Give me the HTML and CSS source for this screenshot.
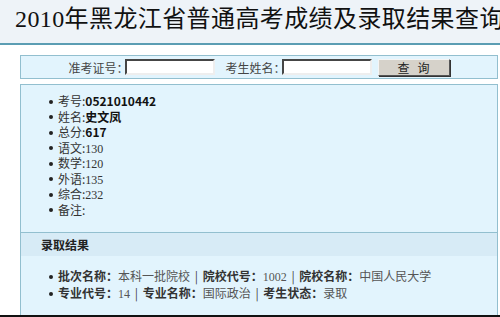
FILE: index.html
```html
<!DOCTYPE html>
<html lang="zh-CN">
<head>
    <meta charset="UTF-8">
    <title>2010年黑龙江省普通高考成绩及录取结果查询</title>
    <link rel="stylesheet" href="styles.css">
</head>
<body>
    <div class="page">
        <div class="header">
            <h1>2010年黑龙江省普通高考成绩及录取结果查询</h1>
        </div>
        <div class="main">
            <form class="search">
                <label for="zkzh">准考证号：</label>
                <input type="text" id="zkzh" name="zkzh">
                <label for="xm" class="second">考生姓名：</label>
                <input type="text" id="xm" name="xm">
                <button type="button">查&nbsp;&nbsp;&nbsp;询</button>
            </form>
            <div class="result">
                <ul class="score">
                    <li>考号:<b>0521010442</b></li>
                    <li>姓名:<b>史文凤</b></li>
                    <li>总分:<b>617</b></li>
                    <li>语文:<span class="num">130</span></li>
                    <li>数学:<span class="num">120</span></li>
                    <li>外语:<span class="num">135</span></li>
                    <li>综合:<span class="num">232</span></li>
                    <li>备注:</li>
                </ul>
                <div class="admit-title">录取结果</div>
                <ul class="admit">
                    <li><b>批次名称：</b>本科一批院校 <span class="sep">|</span> <b>院校代号：</b><span class="num">1002</span> <span class="sep">|</span> <b>院校名称：</b>中国人民大学</li>
                    <li><b>专业代号：</b><span class="num">14</span> <span class="sep">|</span> <b>专业名称：</b>国际政治 <span class="sep">|</span> <b>考生状态：</b>录取</li>
                </ul>
            </div>
        </div>
    </div>
</body>
</html>
```

FILE: styles.css
```css
body {
    margin: 0;
    padding: 0;
    background-color: white;
    font-family: "Noto Sans CJK SC", sans-serif;
    font-size: 12px;
    color: #333;
}

.page {
    height: 315px;
    overflow: hidden;
    border-bottom: 2px solid #111;
}

.header {
    height: 43px;
    background-color: #eef3f8;
    border-bottom: 2px solid #5b9db3;
    white-space: nowrap;
    overflow: hidden;
}

.header h1 {
    margin: 0;
    padding-left: 15px;
    font-family: "Liberation Serif", "Noto Sans CJK SC", serif;
    font-size: 24px;
    font-weight: normal;
    letter-spacing: 0.4px;
    line-height: 38px;
    color: #111;
}

.main {
    padding: 10px 2px 0 20px;
}

.search {
    display: flex;
    justify-content: center;
    align-items: center;
    height: 22px;
    margin: 0;
    background-color: #e2f4fd;
    border: 1px solid #92bfcf;
}

.search label {
    color: #444;
    margin-right: -4px;
}

.search label.second {
    margin-left: 11px;
}

.search input {
    width: 84px;
    height: 12px;
    padding: 0 1px;
    border: 2px inset #999;
    border-right-color: #eee;
    border-bottom-color: #eee;
    background: white;
}

.search button {
    width: 72px;
    height: 17px;
    margin-left: 6px;
    padding: 0;
    font-family: inherit;
    font-size: 12px;
    color: #222;
    background-color: #d6d2ca;
    border: 1px solid #555;
    border-top-color: #f4f4f4;
    border-left-color: #f4f4f4;
    box-shadow: 1px 1px 0 #333;
    line-height: 15px;
}

.result {
    margin-top: 5px;
    height: 300px;
    background-color: #e2f4fd;
    border: 1px solid #92bfcf;
}

.result ul {
    margin: 0;
    padding-left: 37px;
    list-style: none;
}

.result li::before {
    content: "";
    display: inline-block;
    width: 4px;
    height: 4px;
    margin: 0 5px 2px -9px;
    border-radius: 50%;
    background-color: #222;
    vertical-align: middle;
}

.score {
    padding-top: 8px;
    padding-bottom: 15px;
}

.score li {
    height: 15.5px;
    line-height: 15.5px;
}

.score b {
    color: #111;
}

.num {
    font-family: "Liberation Serif", serif;
    font-size: 12px;
    line-height: 1;
}

.admit-title {
    height: 23px;
    line-height: 23px;
    padding-left: 20px;
    font-weight: bold;
    color: #222;
    background-color: #d7ebf6;
    border-top: 1px solid #92bfcf;
}

.admit {
    padding-top: 11px;
    color: #555;
}

.admit li {
    height: 17px;
    line-height: 17px;
}

.admit b {
    color: #333;
}

.sep {
    color: #444;
    margin: 0 2px;
}
```
